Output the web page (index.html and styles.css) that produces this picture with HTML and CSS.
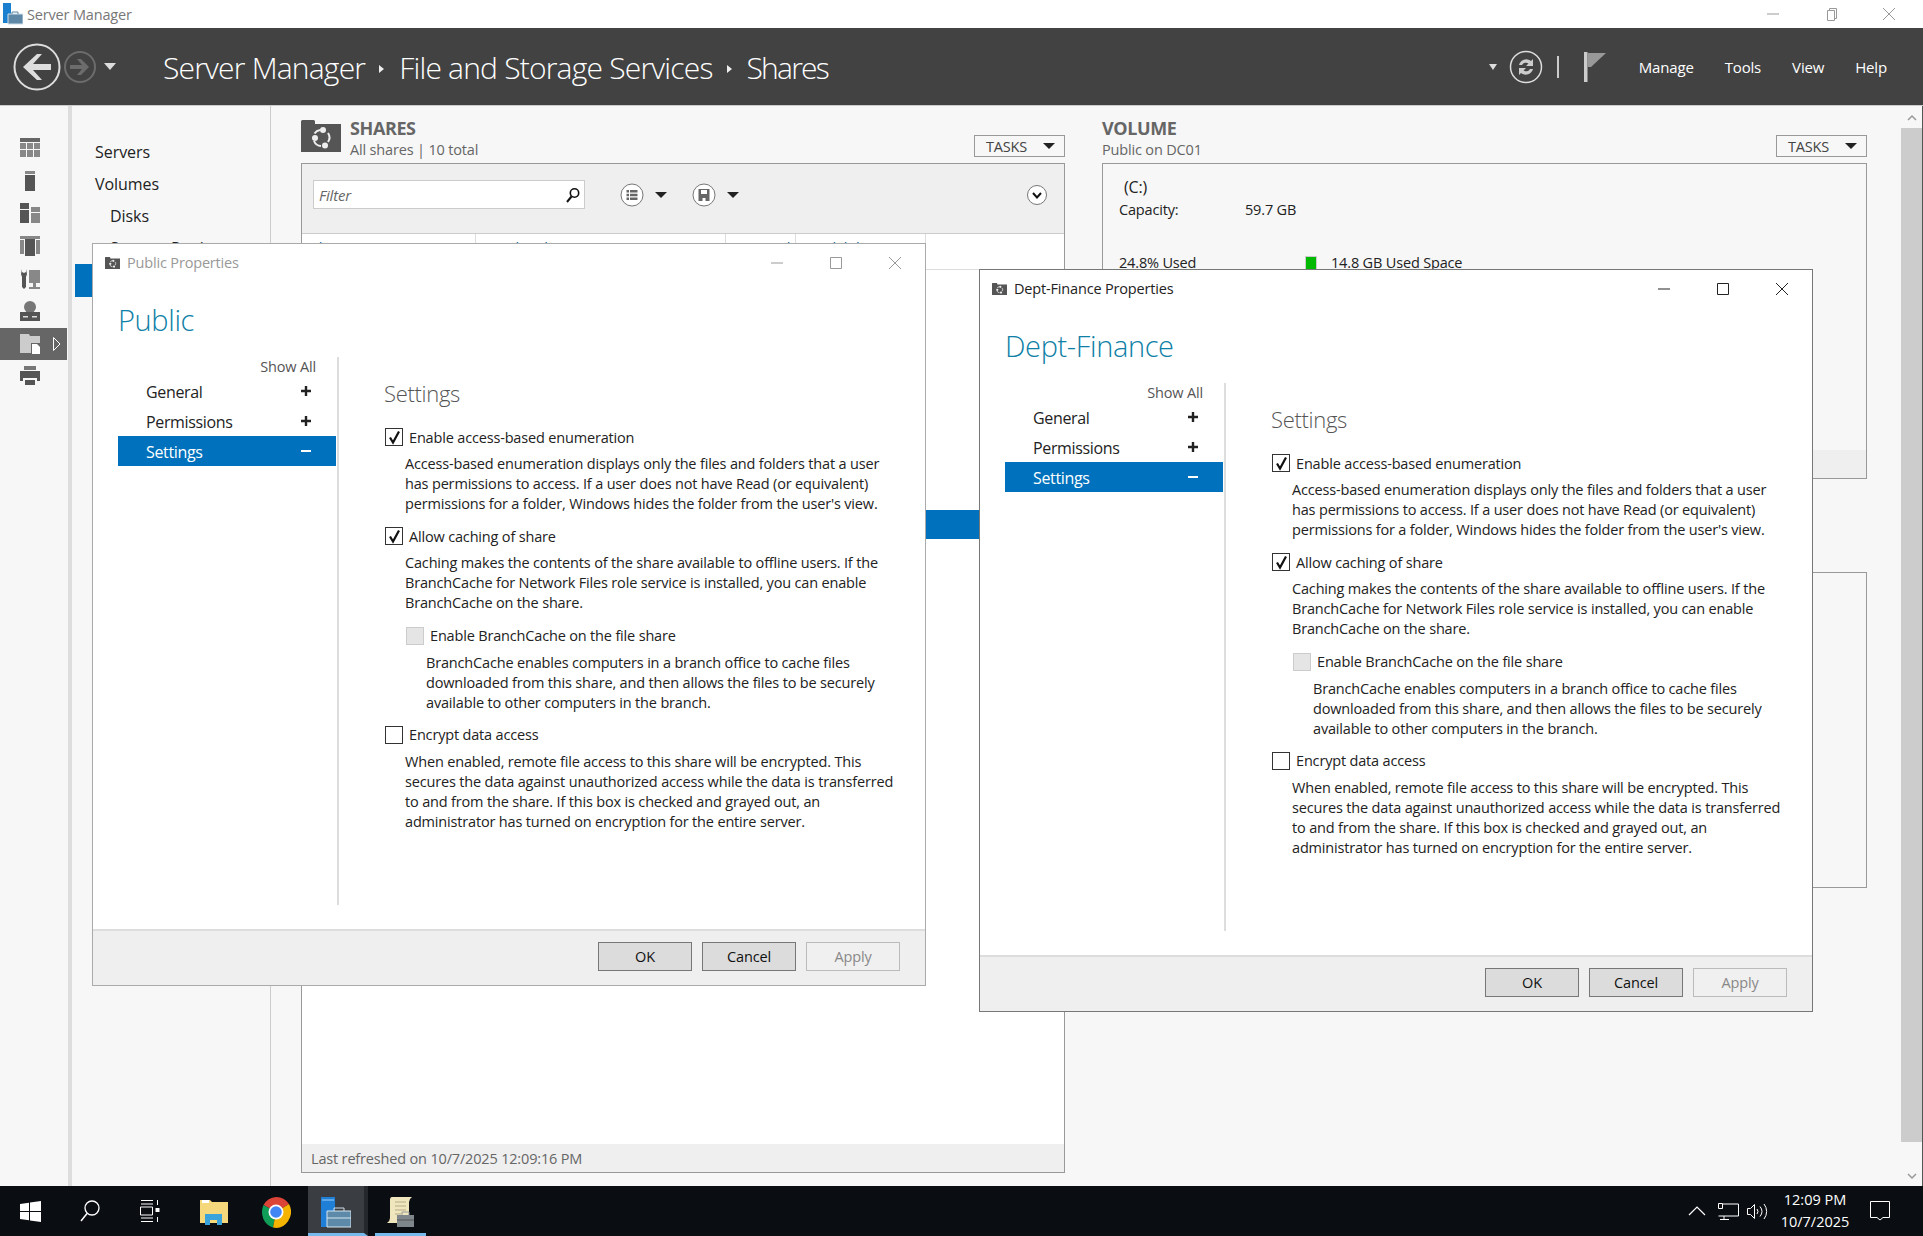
FILE: index.html
```html
<!DOCTYPE html>
<html lang="en">
<head>
    <meta charset="UTF-8">
    <title>Server Manager</title>
    <link rel="stylesheet" href="styles.css">
</head>
<body>
    <svg class="defs" width="0" height="0">
        <symbol id="share-badge" viewBox="0 0 40 32">
            <path d="M0 32V1.500Q0 0 1.500 0h11Q14 0 14 1.500V4h26v28z" fill="#555"/>
            <path d="M13.500 13.500A8 8 0 0 1 19 10M27 13A8 8 0 0 1 27 22M20 26A8 8 0 0 1 13 21" fill="none" stroke="#eee" stroke-width="2"/>
            <circle cx="22" cy="10" r="3" fill="#eee"/>
            <circle cx="14" cy="18" r="3" fill="#eee"/>
            <circle cx="24" cy="25.500" r="3" fill="#eee"/>
        </symbol>
        <symbol id="check" viewBox="0 0 17 17">
            <path d="M4 8.500 7 13.500 13 2.500" fill="none" stroke="#111" stroke-width="2.200"/>
        </symbol>
        <symbol id="plus" viewBox="0 0 12 12">
            <path d="M6 1v10M1 6h10" stroke="currentColor" stroke-width="2.400"/>
        </symbol>
        <symbol id="minus" viewBox="0 0 12 12">
            <path d="M1 6h10" stroke="currentColor" stroke-width="2"/>
        </symbol>
    </svg>

    <div class="titlebar">
        <svg class="app-icon" width="20" height="22" viewBox="0 0 20 22">
            <path d="M0 0h8v20H0z" fill="#1b7fd0"/>
            <path d="M5 11h15v10H5z" fill="#5f87a6" stroke="#cfe0ec"/>
            <path d="M9 11V9h6v2" fill="none" stroke="#5f87a6"/>
        </svg>
        <span class="titlebar-text">Server Manager</span>
        <div class="win-controls">
            <svg width="14" height="14" viewBox="0 0 14 14"><path d="M1 7h12" stroke="#999"/></svg>
            <svg width="14" height="14" viewBox="0 0 14 14"><path d="M3.500 3.500h7v10h-7zM5.500 3.500v-2h7v10h-2" fill="none" stroke="#999"/></svg>
            <svg width="14" height="14" viewBox="0 0 14 14"><path d="M1 1l12 12M13 1 1 13" stroke="#999"/></svg>
        </div>
    </div>

    <header class="header">
        <svg class="nav-arrows" width="118" height="50" viewBox="0 0 118 50">
            <circle cx="24" cy="25" r="22.500" fill="none" stroke="#ddd" stroke-width="2"/>
            <path d="M10 25 24 12h5l-9 10h18v6H20l9 10h-5z" fill="#ddd"/>
            <circle cx="67" cy="25" r="15" fill="none" stroke="#6c6c6c" stroke-width="2"/>
            <path d="M76 25 68 17h-4l5 6H57v4h12l-5 6h4z" fill="#6c6c6c"/>
            <path d="M91 21h12l-6 7z" fill="#ddd"/>
        </svg>
        <nav class="crumbs">
            <span>Server Manager</span><i class="crumb-arrow"></i>
            <span>File and Storage Services</span><i class="crumb-arrow"></i>
            <span>Shares</span>
        </nav>
        <div class="header-right">
            <i class="small-arrow"></i>
            <svg class="refresh" width="34" height="34" viewBox="0 0 34 34">
                <circle cx="17" cy="17" r="15.500" fill="none" stroke="#ddd" stroke-width="1.500"/>
                <path d="M10 15a7.500 7.500 0 0 1 12-4l2-2v7h-7l2.500-2.500a4.500 4.500 0 0 0-6.500 1.500zM24 19a7.500 7.500 0 0 1-12 4l-2 2v-7h7l-2.500 2.500a4.500 4.500 0 0 0 6.500-1.500z" fill="#ccc"/>
            </svg>
            <i class="header-sep"></i>
            <svg class="flag" width="22" height="30" viewBox="0 0 22 30">
                <path d="M0 0h3.500v30H0z" fill="#ccc"/>
                <path d="M3.500 1H22L7 15H3.500z" fill="#999"/>
            </svg>
            <a class="menu">Manage</a>
            <a class="menu">Tools</a>
            <a class="menu">View</a>
            <a class="menu">Help</a>
        </div>
    </header>

    <main class="main">
        <aside class="rail">
            <div class="rail-item">
                <svg width="20" height="20" viewBox="0 0 20 20"><path d="M0 0h20v4H0z" fill="#666"/><path d="M0 5h6v6H0zM7 5h6v6H7zM14 5h6v6h-6zM0 12h6v7H0zM7 12h6v7H7zM14 12h6v7h-6z" fill="#888"/></svg>
            </div>
            <div class="rail-item">
                <svg width="10" height="20" viewBox="0 0 10 20"><path d="M0 0h10v3H0z" fill="#888"/><path d="M0 4h10v16H0z" fill="#555"/></svg>
            </div>
            <div class="rail-item">
                <svg width="20" height="20" viewBox="0 0 20 20"><path d="M0 0h9v6H0zM0 7h9v13H0z" fill="#555"/><path d="M11 4h9v5h-9zM11 10h9v10h-9z" fill="#888"/></svg>
            </div>
            <div class="rail-item">
                <svg width="20" height="20" viewBox="0 0 20 20"><path d="M0 0h20v3H0zM0 4h4v14H0zM16 4h4v14h-4z" fill="#888"/><path d="M5 3h10v17H5z" fill="#555"/></svg>
            </div>
            <div class="rail-item">
                <svg width="20" height="20" viewBox="0 0 20 20"><path d="M2 0v3l2 1 2-1V0l1 5-1 3v10l-2 2-2-2V8L1 5z" fill="#555"/><path d="M9 1h11v13H9zM13 14h3v4h4v2H9v-2h4z" fill="#888"/></svg>
            </div>
            <div class="rail-item">
                <svg width="20" height="20" viewBox="0 0 20 20"><circle cx="10" cy="6" r="6" fill="#777"/><path d="M0 11h20v9H0z" fill="#555"/><path d="M3 15h5v1.500H3zM12 15h5v1.500h-5z" fill="#ddd"/></svg>
            </div>
            <div class="rail-item active">
                <svg width="20" height="20" viewBox="0 0 20 20"><path d="M0 0h9l1 2h10v7h-9v10H0z" fill="#ccc"/><path d="M12 10h5l3 3v7h-8z" fill="#fff"/></svg>
                <svg class="rail-caret" width="8" height="14" viewBox="0 0 8 14"><path d="M.500.500 7 7 .500 13.500z" fill="none" stroke="#fff"/></svg>
            </div>
            <div class="rail-item">
                <svg width="20" height="20" viewBox="0 0 20 20"><path d="M4 0h12v4H4z" fill="#777"/><path d="M0 5h20v10h-3v-3H3v3H0z" fill="#555"/><path d="M5 14h10v5H5z" fill="#555"/></svg>
            </div>
        </aside>

        <nav class="side-nav">
            <a class="side-link">Servers</a>
            <a class="side-link">Volumes</a>
            <a class="side-link sub">Disks</a>
            <a class="side-link sub">Storage Pools</a>
            <a class="side-link sub selected">Shares</a>
        </nav>

        <section class="content">
            <div class="tile shares-tile">
                <div class="tile-head">
                    <svg class="tile-icon" width="40" height="32"><use href="#share-badge"/></svg>
                    <div class="tile-titles">
                        <h2 class="tile-title">SHARES</h2>
                        <div class="tile-sub">All shares | 10 total</div>
                    </div>
                    <button class="tasks">TASKS<i class="tasks-arrow"></i></button>
                </div>
                <div class="panel shares-panel">
                    <div class="toolbar">
                        <div class="filter">
                            <span class="filter-hint">Filter</span>
                            <svg width="14" height="16" viewBox="0 0 14 16"><circle cx="8.500" cy="6" r="4.200" fill="none" stroke="#111" stroke-width="1.600"/><path d="M5.500 9.500 1 15" stroke="#111" stroke-width="2"/></svg>
                        </div>
                        <svg class="tool-btn" width="24" height="24" viewBox="0 0 24 24"><circle cx="12" cy="12" r="11" fill="#fff" stroke="#777"/><path d="M6.500 7h2.500v2.500H6.500zM6.500 10.800h2.500v2.500H6.500zM6.500 14.600h2.500v2.500H6.500zM10 7h7.500v2.500H10zM10 10.800h7.500v2.500H10zM10 14.600h7.500v2.500H10z" fill="#666"/></svg>
                        <i class="tool-arrow"></i>
                        <svg class="tool-btn second" width="24" height="24" viewBox="0 0 24 24"><circle cx="12" cy="12" r="11" fill="#fff" stroke="#777"/><path d="M6.500 6h11v12h-11z" fill="#666"/><path d="M9 7h6v4H9zM10.500 15h3v3h-3z" fill="#fff"/></svg>
                        <i class="tool-arrow"></i>
                        <svg class="tool-btn expand" width="22" height="22" viewBox="0 0 22 22"><circle cx="11" cy="11" r="9.500" fill="#fff" stroke="#777"/><path d="M7 9l4 4.500L15 9" fill="none" stroke="#111" stroke-width="2"/></svg>
                    </div>
                    <div class="share-head">
                        <span class="col col-name">Share</span>
                        <span class="col col-path">Local Path</span>
                        <span class="col col-proto">Protocol</span>
                        <span class="col col-avail">Availability Type</span>
                    </div>
                    <div class="share-rows">
                        <div class="share-row selected"></div>
                    </div>
                    <div class="status-bar">Last refreshed on 10/7/2025 12:09:16 PM</div>
                </div>
            </div>

            <div class="tile volume-tile">
                <div class="tile-head">
                    <div class="tile-titles">
                        <h2 class="tile-title">VOLUME</h2>
                        <div class="tile-sub">Public on DC01</div>
                    </div>
                    <button class="tasks">TASKS<i class="tasks-arrow"></i></button>
                </div>
                <div class="panel volume-panel">
                    <div class="volume-body">
                        <div class="drive">(C:)</div>
                        <div class="capacity"><span class="cap-label">Capacity:</span><span>59.7 GB</span></div>
                        <div class="usage">
                            <span class="used-pct">24.8% Used</span>
                            <i class="used-swatch"></i>
                            <span>14.8 GB Used Space</span>
                        </div>
                    </div>
                    <div class="volume-foot"></div>
                </div>
                <div class="panel quota-panel"></div>
            </div>
        </section>

        <div class="scrollbar">
            <svg width="12" height="8" viewBox="0 0 12 8"><path d="M2 6l4-4 4 4" fill="none" stroke="#999" stroke-width="1.500"/></svg>
            <div class="scroll-thumb"></div>
            <svg width="12" height="8" viewBox="0 0 12 8"><path d="M2 2l4 4 4-4" fill="none" stroke="#999" stroke-width="1.500"/></svg>
        </div>
    </main>

    <footer class="taskbar">
        <svg class="tb-icon start" width="21" height="21" viewBox="0 0 21 21"><path d="M0 3l9-1.300V10H0zM10 1.500 21 0v10H10zM0 11h9v8.300L0 18zM10 11h11v10l-11-1.500z" fill="#fff"/></svg>
        <svg class="tb-icon search" width="20" height="24" viewBox="0 0 20 24"><circle cx="12" cy="9" r="7" fill="none" stroke="#fff" stroke-width="1.300"/><path d="M7 14.500 1 22" stroke="#fff" stroke-width="1.500"/></svg>
        <svg class="tb-icon taskview" width="20" height="22" viewBox="0 0 20 22"><path d="M1 .500h12M1 21.500h12M.500 7h12v8H.500zM1 4h12M1 18h12M17.500 0v5M17.500 17v5" fill="none" stroke="#fff"/><path d="M15.500 8h4v4h-4z" fill="#fff"/></svg>
        <svg class="tb-icon explorer" width="28" height="26" viewBox="0 0 28 26"><path d="M0 1h10l2 2h16v21H0z" fill="#f5d77c"/><path d="M2 1h7v3H2z" fill="#fff"/><path d="M5 26V15h17v11h-5v-5h-7v5z" fill="#3ba3dc"/></svg>
        <svg class="tb-icon chrome" width="30" height="32" viewBox="0 0 30 32">
            <path d="M15 16 2.500 9A15 16 0 0 1 28 8z" fill="#db4437"/>
            <path d="M15 16 2.500 9A15 16 0 0 0 12 31.500z" fill="#0f9d58"/>
            <path d="M15 16 28 8A15 16 0 0 1 12 31.500z" fill="#f4b400"/>
            <circle cx="15" cy="16" r="7.500" fill="#fff"/>
            <circle cx="15" cy="16" r="5.800" fill="#4285f4"/>
        </svg>
        <div class="tb-app active">
            <svg width="30" height="32" viewBox="0 0 30 32"><path d="M0 1h14v30H0z" fill="#1f7fd6"/><path d="M1 4h12" stroke="#9fd0f5"/><path d="M6 15h24v16H6z" fill="#5d8aa8" stroke="#d8e6ee"/><path d="M13 15v-3h10v3" fill="none" stroke="#cfdce4"/><path d="M6 22h24" stroke="#d8e6ee"/></svg>
        </div>
        <div class="tb-app open">
            <svg width="30" height="34" viewBox="0 0 30 34"><path d="M6 1h20q-3 2-3 5v21H1q3-2 3-5V4q0-3 2-3z" fill="#efe6bd"/><path d="M9 6h11M9 10h11M9 14h11M9 18h6" stroke="#b3ab88"/><path d="M11 19h17v12H11z" fill="#7f878d"/><path d="M16 19v-3h7v3" fill="none" stroke="#999"/><path d="M11 24h17" stroke="#555"/></svg>
        </div>
        <div class="tray">
            <svg class="tray-up" width="18" height="10" viewBox="0 0 18 10"><path d="M1 9 9 1l8 8" fill="none" stroke="#fff" stroke-width="1.200"/></svg>
            <svg width="21" height="17" viewBox="0 0 21 17"><path d="M4.500 1H20.500V13H.500M6 13v3M2 16.500h9" fill="none" stroke="#fff"/><path d="M.500.500h4v5h-4z" fill="#111" stroke="#fff"/></svg>
            <svg width="21" height="17" viewBox="0 0 21 17"><path d="M.500 5.500h3l4-4v14l-4-4h-3zM10 6a4 4 0 0 1 0 5M13 3.500a8 8 0 0 1 0 10M17 1a12 12 0 0 1 0 15" fill="none" stroke="#fff"/></svg>
            <div class="clock"><div>12:09 PM</div><div>10/7/2025</div></div>
            <svg class="notify" width="20" height="20" viewBox="0 0 20 20"><path d="M.500.500h19v16H13L10 19l-3-2.500H.500z" fill="none" stroke="#fff"/></svg>
        </div>
    </footer>

    <div class="dialog inactive public-dialog">
        <div class="dialog-title">
            <svg width="15" height="14"><use href="#share-badge"/></svg>
            <span class="dialog-title-text">Public Properties</span>
            <div class="dialog-controls">
                <svg width="14" height="14" viewBox="0 0 14 14"><path d="M1 7h12" stroke="currentColor"/></svg>
                <svg width="14" height="14" viewBox="0 0 14 14"><path d="M1.500 1.500h11v11h-11z" fill="none" stroke="currentColor"/></svg>
                <svg width="14" height="14" viewBox="0 0 14 14"><path d="M1 1l12 12M13 1 1 13" stroke="currentColor"/></svg>
            </div>
        </div>
        <h1 class="dialog-heading">Public</h1>
        <div class="dialog-main">
            <div class="dialog-nav">
                <div class="show-all">Show All</div>
                <div class="dialog-nav-row">General<svg width="12" height="12"><use href="#plus"/></svg></div>
                <div class="dialog-nav-row">Permissions<svg width="12" height="12"><use href="#plus"/></svg></div>
                <div class="dialog-nav-row current">Settings<svg width="12" height="12"><use href="#minus"/></svg></div>
            </div>
            <div class="dialog-pane">
                <h3 class="pane-title">Settings</h3>
                <div class="option">
                    <div class="opt-label"><span class="box"><svg width="17" height="17"><use href="#check"/></svg></span>Enable access-based enumeration</div>
                    <p class="opt-text">Access-based enumeration displays only the files and folders that a user<br>has permissions to access. If a user does not have Read (or equivalent)<br>permissions for a folder, Windows hides the folder from the user's view.</p>
                </div>
                <div class="option">
                    <div class="opt-label"><span class="box"><svg width="17" height="17"><use href="#check"/></svg></span>Allow caching of share</div>
                    <p class="opt-text">Caching makes the contents of the share available to offline users. If the<br>BranchCache for Network Files role service is installed, you can enable<br>BranchCache on the share.</p>
                </div>
                <div class="option nested">
                    <div class="opt-label"><span class="box disabled"></span>Enable BranchCache on the file share</div>
                    <p class="opt-text">BranchCache enables computers in a branch office to cache files<br>downloaded from this share, and then allows the files to be securely<br>available to other computers in the branch.</p>
                </div>
                <div class="option">
                    <div class="opt-label"><span class="box"></span>Encrypt data access</div>
                    <p class="opt-text">When enabled, remote file access to this share will be encrypted. This<br>secures the data against unauthorized access while the data is transferred<br>to and from the share. If this box is checked and grayed out, an<br>administrator has turned on encryption for the entire server.</p>
                </div>
            </div>
        </div>
        <div class="dialog-foot">
            <button class="dlg-btn">OK</button>
            <button class="dlg-btn">Cancel</button>
            <button class="dlg-btn off">Apply</button>
        </div>
    </div>

    <div class="dialog finance-dialog">
        <div class="dialog-title">
            <svg width="15" height="14"><use href="#share-badge"/></svg>
            <span class="dialog-title-text">Dept-Finance Properties</span>
            <div class="dialog-controls">
                <svg width="14" height="14" viewBox="0 0 14 14"><path d="M1 7h12" stroke="currentColor"/></svg>
                <svg width="14" height="14" viewBox="0 0 14 14"><path d="M1.500 1.500h11v11h-11z" fill="none" stroke="currentColor"/></svg>
                <svg width="14" height="14" viewBox="0 0 14 14"><path d="M1 1l12 12M13 1 1 13" stroke="currentColor"/></svg>
            </div>
        </div>
        <h1 class="dialog-heading">Dept-Finance</h1>
        <div class="dialog-main">
            <div class="dialog-nav">
                <div class="show-all">Show All</div>
                <div class="dialog-nav-row">General<svg width="12" height="12"><use href="#plus"/></svg></div>
                <div class="dialog-nav-row">Permissions<svg width="12" height="12"><use href="#plus"/></svg></div>
                <div class="dialog-nav-row current">Settings<svg width="12" height="12"><use href="#minus"/></svg></div>
            </div>
            <div class="dialog-pane">
                <h3 class="pane-title">Settings</h3>
                <div class="option">
                    <div class="opt-label"><span class="box"><svg width="17" height="17"><use href="#check"/></svg></span>Enable access-based enumeration</div>
                    <p class="opt-text">Access-based enumeration displays only the files and folders that a user<br>has permissions to access. If a user does not have Read (or equivalent)<br>permissions for a folder, Windows hides the folder from the user's view.</p>
                </div>
                <div class="option">
                    <div class="opt-label"><span class="box"><svg width="17" height="17"><use href="#check"/></svg></span>Allow caching of share</div>
                    <p class="opt-text">Caching makes the contents of the share available to offline users. If the<br>BranchCache for Network Files role service is installed, you can enable<br>BranchCache on the share.</p>
                </div>
                <div class="option nested">
                    <div class="opt-label"><span class="box disabled"></span>Enable BranchCache on the file share</div>
                    <p class="opt-text">BranchCache enables computers in a branch office to cache files<br>downloaded from this share, and then allows the files to be securely<br>available to other computers in the branch.</p>
                </div>
                <div class="option">
                    <div class="opt-label"><span class="box"></span>Encrypt data access</div>
                    <p class="opt-text">When enabled, remote file access to this share will be encrypted. This<br>secures the data against unauthorized access while the data is transferred<br>to and from the share. If this box is checked and grayed out, an<br>administrator has turned on encryption for the entire server.</p>
                </div>
            </div>
        </div>
        <div class="dialog-foot">
            <button class="dlg-btn">OK</button>
            <button class="dlg-btn">Cancel</button>
            <button class="dlg-btn off">Apply</button>
        </div>
    </div>
</body>
</html>
```

FILE: styles.css
```css
* {
    box-sizing: border-box;
}

html, body {
    margin: 0;
}

body {
    position: relative;
    display: flex;
    flex-direction: column;
    height: 1236px;
    font-family: "Open Sans", "Noto Sans", sans-serif;
    font-size: 14.5px;
    letter-spacing: -0.17px;
    color: #222;
    background: #f7f7f7;
}

button {
    font: inherit;
    letter-spacing: inherit;
}

.defs {
    position: absolute;
}

/* top window bar */
.titlebar {
    display: flex;
    align-items: center;
    flex: none;
    height: 28px;
    padding-left: 3px;
    background: #fff;
}

.titlebar-text {
    margin-left: 4px;
    color: #777;
}

.win-controls {
    display: flex;
    gap: 44px;
    margin-left: auto;
    margin-right: 27px;
}

.header {
    display: flex;
    align-items: center;
    flex: none;
    height: 78px;
    padding-left: 13px;
    background: #424242;
    border-bottom: 1px solid #ccc;
    color: #fff;
}

.crumbs {
    display: flex;
    align-items: center;
    margin-left: 32px;
    padding-top: 2px;
    font-size: 30px;
    font-weight: 300;
    letter-spacing: -0.8px;
    color: #fff;
}

.crumbs span:last-child {
    letter-spacing: -1.8px;
}

.crumb-arrow {
    width: 0;
    height: 0;
    margin: 2px 15px 0 14px;
    border-left: 5px solid #eee;
    border-top: 4px solid transparent;
    border-bottom: 4px solid transparent;
}

.header-right {
    display: flex;
    align-items: center;
    margin-left: auto;
}

.small-arrow {
    width: 0;
    height: 0;
    margin-right: 12px;
    border-top: 6px solid #ddd;
    border-left: 4px solid transparent;
    border-right: 4px solid transparent;
}

.header-sep {
    width: 2px;
    height: 22px;
    margin: 0 25px 0 14px;
    background: #ccc;
}

.flag {
    margin-right: 33px;
}

.menu {
    margin-right: 31px;
    font-size: 15px;
    color: #fff;
}

.menu:last-child {
    margin-right: 36px;
}

/* page body */
.main {
    flex: 1;
    display: flex;
    min-height: 0;
}

.rail {
    flex: none;
    width: 72px;
    padding: 26px 0 0;
    border-right: 4px solid #ddd;
}

.rail-item {
    position: relative;
    display: flex;
    align-items: center;
    justify-content: center;
    width: 60px;
    height: 32.600px;
}

.rail-item.active {
    width: 67px;
    padding-right: 7px;
    background: #666;
}

.rail-caret {
    position: absolute;
    left: 53px;
    top: 9px;
}

.side-nav {
    flex: none;
    width: 199px;
    padding: 30px 0 0 3px;
    border-right: 1px solid #ccc;
    font-size: 16px;
    letter-spacing: -0.05px;
}

.side-link {
    display: flex;
    align-items: center;
    height: 32px;
    padding-left: 20px;
}

.side-link.sub {
    padding-left: 35px;
}

.side-link.selected {
    height: 33px;
    background: #0071bc;
    color: #fff;
}

.content {
    flex: 1;
    display: flex;
    gap: 37px;
    padding: 14px 0 13px 30px;
    min-width: 0;
}

.tile {
    display: flex;
    flex-direction: column;
}

.shares-tile {
    width: 764px;
}

.volume-tile {
    width: 765px;
}

.tile-head {
    display: flex;
    align-items: flex-end;
    height: 43px;
}

.tile-icon {
    align-self: flex-start;
    margin-right: 9px;
}

.tile-titles {
    flex: 1;
    align-self: flex-start;
    margin-top: -2px;
}

.tile-title {
    margin: 0;
    font-size: 18px;
    line-height: 21px;
    font-weight: 700;
    letter-spacing: -0.4px;
    color: #666;
}

.tile-sub {
    line-height: 22px;
    color: #666;
}

.tasks {
    display: flex;
    align-items: center;
    justify-content: space-between;
    width: 91px;
    height: 22px;
    margin-bottom: 6px;
    padding: 0 9px 0 11px;
    background: #f7f7f7;
    border: 1px solid #999;
    color: #444;
}

.tasks-arrow, .tool-arrow {
    width: 0;
    height: 0;
    border-top: 6px solid #222;
    border-left: 6px solid transparent;
    border-right: 6px solid transparent;
}

.panel {
    border: 1px solid #999;
}

.shares-panel {
    flex: 1;
    display: flex;
    flex-direction: column;
    background: #fff;
}

.toolbar {
    display: flex;
    align-items: center;
    flex: none;
    height: 70px;
    padding: 0 0 8px 11px;
    background: #efefef;
    border-bottom: 1px solid #ccc;
}

.filter {
    display: flex;
    align-items: center;
    justify-content: space-between;
    width: 272px;
    height: 29px;
    padding: 0 4px 0 5px;
    background: #fff;
    border: 1px solid #ccc;
    margin-right: 35px;
}

.filter-hint {
    font-size: 15px;
    font-style: italic;
    color: #666;
}

.tool-arrow {
    margin: 0 0 0 11px;
}

.tool-btn.second {
    margin-left: 25px;
}

.tool-btn.expand {
    margin-left: auto;
    margin-right: 16px;
}

.share-head {
    display: flex;
    flex: none;
    height: 36px;
    border-bottom: 1px solid #ddd;
    color: #0b6a9e;
}

.col {
    padding: 4px 0 0 9px;
    border-right: 1px solid #ddd;
}

.col-name {
    width: 174px;
}

.col-path {
    width: 250px;
}

.col-proto {
    width: 70px;
}

.col-avail {
    width: 130px;
}

.share-rows {
    flex: 1;
    padding-top: 240px;
}

.share-row {
    height: 29px;
}

.share-row.selected {
    background: #0071bc;
}

.status-bar {
    display: flex;
    align-items: center;
    flex: none;
    height: 28px;
    padding-left: 9px;
    background: #efefef;
    color: #666;
}

.volume-panel {
    display: flex;
    flex-direction: column;
    height: 316px;
    background: #f7f7f7;
}

.volume-body {
    flex: 1;
    padding: 12px 0 0 16px;
}

.drive {
    margin-left: 5px;
    font-size: 16px;
    line-height: 22px;
}

.capacity {
    display: flex;
    margin-top: 1px;
    line-height: 22px;
}

.cap-label {
    width: 126px;
}

.usage {
    display: flex;
    align-items: center;
    margin-top: 31px;
    line-height: 22px;
}

.used-pct {
    width: 186px;
}

.used-swatch {
    width: 12px;
    height: 14px;
    margin-right: 14px;
    background: #00b900;
    border: 1px solid #ccc;
}

.volume-foot {
    height: 28px;
    background: #efefef;
}

.quota-panel {
    height: 316px;
    margin-top: 93px;
}

.scrollbar {
    flex: none;
    display: flex;
    flex-direction: column;
    align-items: center;
    justify-content: space-between;
    width: 22px;
    padding: 8px 0 6px;
    border-right: 1px solid #555;
    background: #f7f7f7;
}

.scroll-thumb {
    flex: 1;
    align-self: stretch;
    margin: 6px 0 30px;
    background: #ccc;
}

/* taskbar */
.taskbar {
    position: relative;
    display: flex;
    align-items: center;
    flex: none;
    height: 50px;
    background: #0a0d12;
}

.tb-icon {
    position: absolute;
}

.start { left: 20px; top: 15px; }
.search { left: 80px; top: 13px; }
.taskview { left: 140px; top: 14px; }
.explorer { left: 200px; top: 13px; }
.chrome { left: 261px; top: 10px; }

.tb-app {
    position: absolute;
    top: 0;
    display: flex;
    align-items: flex-start;
    justify-content: center;
    height: 50px;
    padding-top: 10px;
    border-bottom: 3px solid #76b9ed;
}

.tb-app.active {
    left: 308px;
    width: 60px;
    background: #3a3d42;
    border-right: 4px solid #24272b;
}

.tb-app.open {
    left: 375px;
    width: 51px;
}

.tray {
    display: flex;
    align-items: center;
    margin-left: auto;
    padding-right: 33px;
    color: #fff;
}

.tray svg {
    margin-right: 8px;
}

.tray .tray-up {
    margin-right: 12px;
}

.clock {
    width: 74px;
    margin-left: 2px;
    font-size: 14.5px;
    line-height: 22px;
    text-align: center;
    letter-spacing: 0;
}

.tray .notify {
    margin: 0 0 0 18px;
}

/* properties dialogs */
.dialog {
    position: absolute;
    display: flex;
    flex-direction: column;
    width: 834px;
    height: 743px;
    background: #fff;
    border: 1px solid #777;
}

.public-dialog {
    left: 92px;
    top: 243px;
    border-color: #aaa;
}

.finance-dialog {
    left: 979px;
    top: 269px;
}

.dialog-title {
    display: flex;
    align-items: center;
    flex: none;
    height: 37px;
    padding-left: 12px;
}

.dialog-title-text {
    margin-left: 7px;
    color: #222;
}

.dialog-controls {
    display: flex;
    gap: 45px;
    margin-left: auto;
    margin-right: 23px;
    color: #222;
}

.inactive .dialog-title-text,
.inactive .dialog-controls {
    color: #999;
}

.dialog-heading {
    flex: none;
    margin: 0 0 0 25px;
    height: 76px;
    font-size: 29px;
    line-height: 78px;
    font-weight: 300;
    letter-spacing: -0.38px;
    color: #0e7fa6;
}

.dialog-main {
    flex: 1;
    display: flex;
}

.dialog-nav {
    flex: none;
    width: 246px;
    height: 548px;
    padding-left: 25px;
    padding-right: 1px;
    border-right: 2px solid #ddd;
}

.show-all {
    height: 19px;
    padding-right: 20px;
    line-height: 20px;
    text-align: right;
    color: #555;
}

.dialog-nav-row {
    display: flex;
    align-items: center;
    justify-content: space-between;
    height: 30px;
    padding: 2px 24px 0 28px;
    font-size: 16px;
    letter-spacing: -0.35px;
    color: #222;
}

.dialog-nav-row svg {
    margin-top: -2px;
}

.dialog-nav-row.current {
    background: #0071bc;
    color: #fff;
}

.dialog-pane {
    flex: 1;
    padding: 20px 0 0 46px;
}

.pane-title {
    margin: 0 0 18px -1px;
    font-size: 22px;
    line-height: 32px;
    font-weight: 300;
    letter-spacing: -0.3px;
    color: #555;
}

.option {
    margin-bottom: 12px;
}

.option.nested {
    margin-left: 21px;
}

.opt-label {
    display: flex;
    align-items: center;
    height: 20px;
    margin-bottom: 7px;
}

.box {
    flex: none;
    width: 18px;
    height: 18px;
    margin-right: 6px;
    background: #fff;
    border: 1px solid #333;
}

.box svg {
    display: block;
}

.box.disabled {
    background: #e5e5e5;
    border-color: #ccc;
}

.opt-text {
    margin: 0 0 0 20px;
    line-height: 20.100px;
}

.dialog-foot {
    flex: none;
    display: flex;
    align-items: center;
    justify-content: flex-end;
    gap: 10px;
    height: 56px;
    padding: 0 25px 3px 0;
    background: #efefef;
    border-top: 2px solid #ddd;
}

.dlg-btn {
    width: 94px;
    height: 29px;
    padding: 0;
    background: #dcdcdc;
    border: 1px solid #777;
    color: #111;
}

.dlg-btn.off {
    background: #f0f0f0;
    border-color: #bbb;
    color: #888;
}
```
